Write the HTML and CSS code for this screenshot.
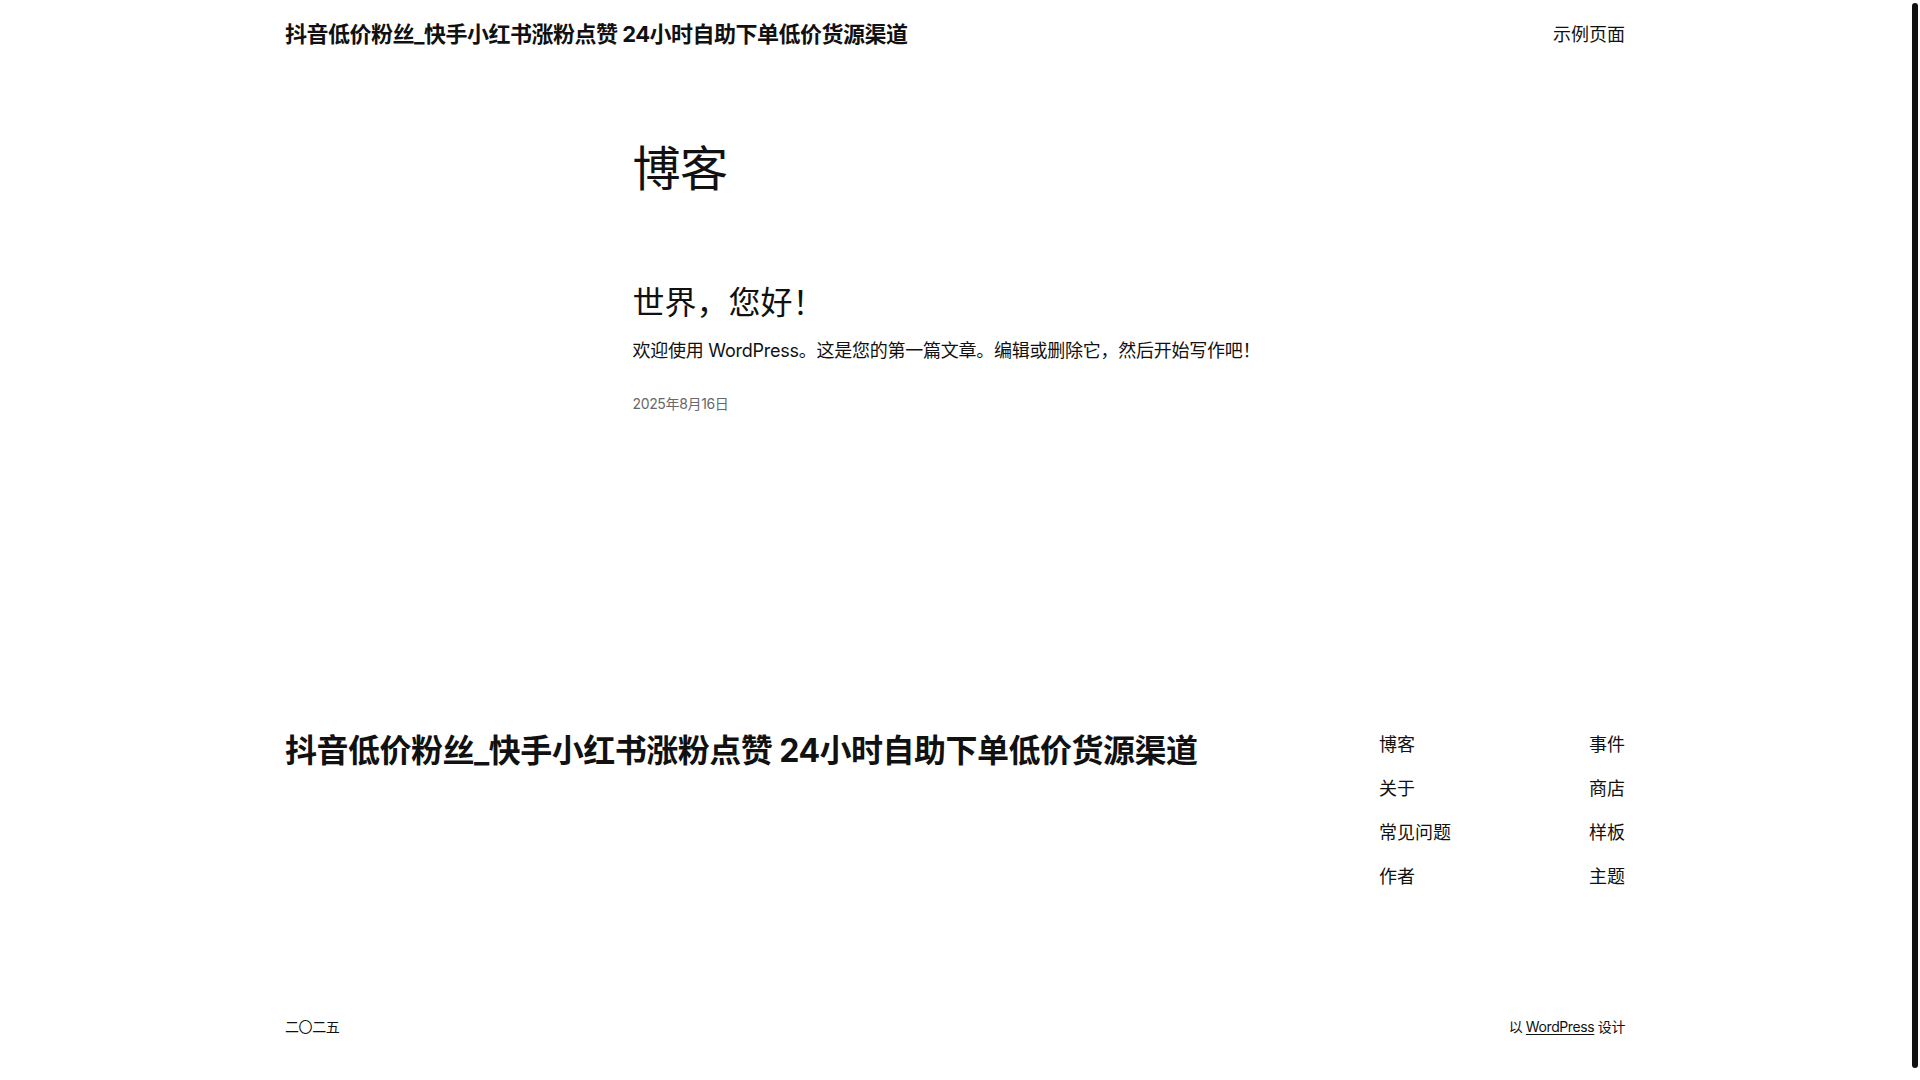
FILE: index.html
```html
<!DOCTYPE html>
<html lang="zh-CN">
<head>
<meta charset="utf-8">
<title>博客 – 抖音低价粉丝_快手小红书涨粉点赞 24小时自助下单低价货源渠道</title>
<link rel="stylesheet" href="styles.css">
</head>
<body>
<div class="page">
  <header class="site-header">
    <a class="site-title" href="#">抖音低价粉丝_快手小红书涨粉点赞 24小时自助下单低价货源渠道</a>
    <nav class="top-nav"><a href="#">示例页面</a></nav>
  </header>

  <main class="content">
    <h1 class="page-title">博客</h1>
    <article class="post">
      <h2 class="post-title"><a href="#">世界，您好！</a></h2>
      <p class="post-excerpt">欢迎使用 WordPress。这是您的第一篇文章。编辑或删除它，然后开始写作吧！</p>
      <time class="post-date">2025年8月16日</time>
    </article>
  </main>

  <footer class="site-footer">
    <div class="footer-top">
      <a class="footer-title" href="#">抖音低价粉丝_快手小红书涨粉点赞 24小时自助下单低价货源渠道</a>
      <div class="footer-navs">
        <nav class="footer-col">
          <a href="#">博客</a>
          <a href="#">关于</a>
          <a href="#">常见问题</a>
          <a href="#">作者</a>
        </nav>
        <nav class="footer-col">
          <a href="#">事件</a>
          <a href="#">商店</a>
          <a href="#">样板</a>
          <a href="#">主题</a>
        </nav>
      </div>
    </div>
    <div class="footer-bottom">
      <span>二〇二五</span>
      <span>以 <a class="credit" href="#">WordPress</a> 设计</span>
    </div>
  </footer>
</div>
<div class="scroll-thumb"></div>
</body>
</html>
```

FILE: styles.css
```css
html, body {
  margin: 0;
  padding: 0;
  background: #ffffff;
}

body {
  padding-right: 10px;
  color: #111111;
  font-family: Inter, "Noto Sans CJK SC", sans-serif;
  font-size: 18px;
  line-height: 1.4;
}

a {
  color: inherit;
  text-decoration: none;
}

.page {
  width: 1340px;
  margin: 0 auto;
}

.site-header {
  display: flex;
  justify-content: space-between;
  align-items: center;
  padding: 19px 0;
}

.site-title {
  font-weight: 700;
  font-size: 22px;
  line-height: 1.4;
  letter-spacing: -0.5px;
}

.top-nav a {
  font-size: 18px;
  line-height: 1.4;
}

.content {
  width: 645px;
  margin: 71px auto 0;
}

.page-title {
  margin: 0;
  font-weight: 400;
  font-size: 48px;
  line-height: 1.2;
  letter-spacing: -0.5px;
}

.post {
  margin-top: 87px;
}

.post-title {
  margin: 0;
  font-weight: 400;
  font-size: 32px;
  line-height: 1.2;
}

.post-excerpt {
  margin: 14.5px 0 0;
  font-size: 18px;
  line-height: 1.6;
  letter-spacing: -0.25px;
}

.post-date {
  display: block;
  margin-top: 28px;
  font-size: 14px;
  line-height: 1.4;
  color: #686868;
  letter-spacing: -0.35px;
}

.site-footer {
  margin-top: 318px;
}

.footer-top {
  display: flex;
  justify-content: space-between;
  align-items: flex-start;
}

.footer-title {
  font-weight: 700;
  font-size: 32px;
  line-height: 1.2;
  letter-spacing: -0.5px;
}

.footer-navs {
  display: flex;
  gap: 138px;
}

.footer-col {
  display: flex;
  flex-direction: column;
  gap: 19px;
}

.footer-col a {
  font-size: 18px;
  line-height: 1.4;
}

.footer-bottom {
  display: flex;
  justify-content: space-between;
  align-items: center;
  margin-top: 128px;
  font-size: 14px;
  line-height: 1.4;
  letter-spacing: -0.4px;
}

.credit {
  text-decoration: underline;
  text-underline-offset: 2px;
}

.scroll-thumb {
  position: fixed;
  top: 3px;
  right: 2px;
  width: 6px;
  height: 1065px;
  border-radius: 3px;
  background: #111111;
}
```
